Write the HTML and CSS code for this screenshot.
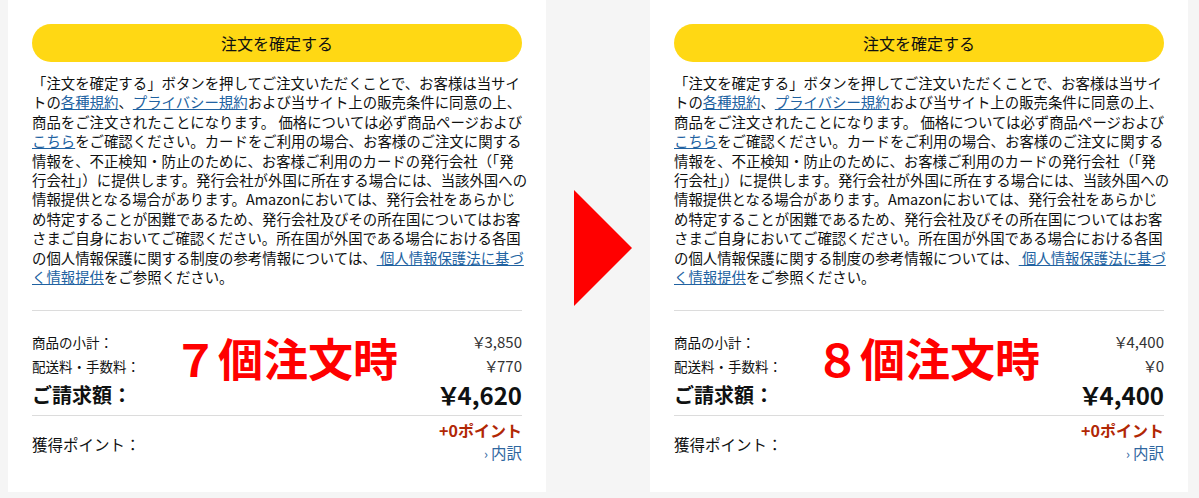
FILE: index.html
```html
<!DOCTYPE html>
<html lang="ja">
<head>
<meta charset="utf-8">
<title>注文比較</title>
<link rel="stylesheet" href="styles.css">
</head>
<body>
<div class="page">
  <section class="panel">
    <button class="place-order">注文を確定する</button>
    <p class="terms">「注文を確定する」ボタンを押してご注文いただくことで、お客様は当サイ<br>トの<a href="#">各種規約</a>、<a href="#">プライバシー規約</a>および当サイト上の販売条件に同意の上、<br>商品をご注文されたことになります。 価格については必ず商品ページおよび<br><a href="#">こちら</a>をご確認ください。カードをご利用の場合、お客様のご注文に関する<br>情報を、不正検知・防止のために、お客様ご利用のカードの発行会社（「発<br>行会社」）に提供します。発行会社が外国に所在する場合には、当該外国への<br>情報提供となる場合があります。Amazonにおいては、発行会社をあらかじ<br>め特定することが困難であるため、発行会社及びその所在国についてはお客<br>さまご自身においてご確認ください。所在国が外国である場合における各国<br>の個人情報保護に関する制度の参考情報については、<a href="#"> 個人情報保護法に基づ<br>く情報提供</a>をご参照ください。</p>
    <div class="summary">
      <div class="row"><span>商品の小計：</span><span class="amt">￥3,850</span></div>
      <div class="row"><span>配送料・手数料：</span><span class="amt">￥770</span></div>
      <div class="row total"><span>ご請求額：</span><span class="amt">￥4,620</span></div>
      <div class="note">７個注文時</div>
    </div>
    <div class="points">
      <span class="points-label">獲得ポイント：</span>
      <div class="points-value">
        <span class="pt">+0ポイント</span>
        <a href="#" class="detail"><span class="chev">›</span>内訳</a>
      </div>
    </div>
  </section>

  <div class="arrow">
    <svg width="58" height="116" viewBox="0 0 58 116"><polygon points="0,0 58,58 0,116" fill="#ff0000"/></svg>
  </div>

  <section class="panel">
    <button class="place-order">注文を確定する</button>
    <p class="terms">「注文を確定する」ボタンを押してご注文いただくことで、お客様は当サイ<br>トの<a href="#">各種規約</a>、<a href="#">プライバシー規約</a>および当サイト上の販売条件に同意の上、<br>商品をご注文されたことになります。 価格については必ず商品ページおよび<br><a href="#">こちら</a>をご確認ください。カードをご利用の場合、お客様のご注文に関する<br>情報を、不正検知・防止のために、お客様ご利用のカードの発行会社（「発<br>行会社」）に提供します。発行会社が外国に所在する場合には、当該外国への<br>情報提供となる場合があります。Amazonにおいては、発行会社をあらかじ<br>め特定することが困難であるため、発行会社及びその所在国についてはお客<br>さまご自身においてご確認ください。所在国が外国である場合における各国<br>の個人情報保護に関する制度の参考情報については、<a href="#"> 個人情報保護法に基づ<br>く情報提供</a>をご参照ください。</p>
    <div class="summary">
      <div class="row"><span>商品の小計：</span><span class="amt">￥4,400</span></div>
      <div class="row"><span>配送料・手数料：</span><span class="amt">￥0</span></div>
      <div class="row total"><span>ご請求額：</span><span class="amt">￥4,400</span></div>
      <div class="note">８個注文時</div>
    </div>
    <div class="points">
      <span class="points-label">獲得ポイント：</span>
      <div class="points-value">
        <span class="pt">+0ポイント</span>
        <a href="#" class="detail"><span class="chev">›</span>内訳</a>
      </div>
    </div>
  </section>
</div>
</body>
</html>
```

FILE: styles.css
```css
* { box-sizing: border-box; }
html, body {
  margin: 0;
  padding: 0;
  background: #f5f5f5;
}
body {
  font-family: "Noto Sans CJK JP", "Noto Sans", sans-serif;
  color: #0f1111;
}
.page {
  display: flex;
  padding-left: 8px;
  width: 1199px;
  height: 498px;
}
.panel {
  width: 538px;
  height: 492px;
  background: #ffffff;
  padding: 24px 24px 0 24px;
  display: flex;
  flex-direction: column;
}
.place-order {
  display: block;
  width: 490px;
  height: 38px;
  border: none;
  border-radius: 19px;
  background: #ffd814;
  color: #0f1111;
  font-family: inherit;
  font-size: 16px;
  line-height: 38px;
  padding: 0;
}
.terms {
  margin: 11px 0 0 0;
  font-size: 14.4px;
  line-height: 19.4px;
  white-space: nowrap;
  letter-spacing: 0;
}
.terms a {
  color: #2162a1;
  text-decoration: underline;
}
.summary {
  position: relative;
  margin-top: 24px;
  border-top: 1px solid #dcdcdc;
  border-bottom: 1px solid #dcdcdc;
  padding: 19px 0 4px 0;
}
.row {
  display: flex;
  justify-content: space-between;
  align-items: center;
  font-size: 13.5px;
  line-height: 24px;
}
.row .amt {
  font-size: 15px;
  color: #333;
  font-feature-settings: "palt";
}
.row.total {
  font-size: 20px;
  font-weight: bold;
  line-height: 33px;
}
.row.total .amt {
  font-size: 24px;
  color: #0f1111;
}
.note {
  position: absolute;
  left: 141px;
  top: 17px;
  font-size: 45px;
  font-weight: bold;
  line-height: 60px;
  color: #ff0000;
}
.points {
  display: flex;
  justify-content: space-between;
  align-items: center;
  padding-top: 3px;
}
.points-label {
  font-size: 15.5px;
  line-height: 22px;
  padding-top: 4px;
}
.points-value {
  display: flex;
  flex-direction: column;
  align-items: flex-end;
}
.pt {
  color: #b12704;
  font-weight: bold;
  font-size: 16px;
  line-height: 22px;
}
.detail {
  color: #2f67a0;
  text-decoration: none;
  font-size: 15.5px;
  line-height: 23px;
}
.chev {
  font-size: 13px;
  margin-right: 3px;
}
.arrow {
  width: 104px;
  height: 492px;
  display: flex;
  align-items: center;
  justify-content: flex-start;
  padding-left: 28px;
  padding-top: 4px;
}
.arrow svg {
  display: block;
}
```
